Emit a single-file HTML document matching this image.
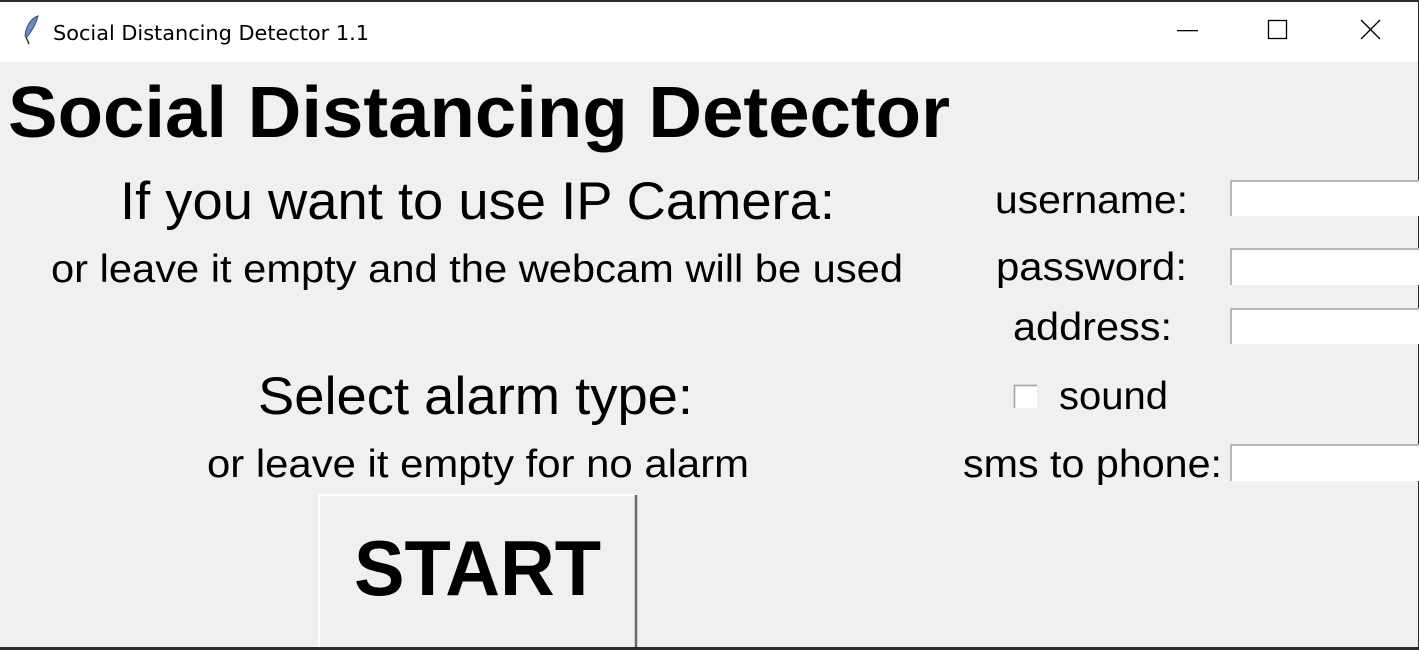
<!DOCTYPE html>
<html><head><meta charset="utf-8"><style>
html,body{margin:0;padding:0;width:1419px;height:650px;overflow:hidden;background:#f0f0f0}
svg{display:block}
text{font-family:"Liberation Sans",Arial,sans-serif;fill:#000}
</style></head><body>
<svg width="1419" height="650" viewBox="0 0 1419 650" xmlns="http://www.w3.org/2000/svg">
<rect x="0" y="0" width="1419" height="650" fill="#f0f0f0"/>
<rect x="0" y="0" width="1419" height="62" fill="#fff"/>
<rect x="0" y="0" width="1419" height="2" fill="#2b2b2b"/>
<rect x="1418" y="0" width="1" height="650" fill="#2b2b2b"/>
<rect x="0" y="647" width="1419" height="3" fill="#2b2b2b"/>
<!-- feather icon -->
<path d="M38 16 C31 18 26 26 25 36 L27 37 C31 32 36 24 38 16 Z" fill="#6b8cc4" stroke="#2d4a7a" stroke-width="1"/>
<path d="M26 37 L29 44" stroke="#333" stroke-width="1.5"/>
<text x="53" y="40" font-size="20" textLength="316" lengthAdjust="spacingAndGlyphs" style="font-family:'DejaVu Sans','Liberation Sans',sans-serif" fill="#000">Social Distancing Detector 1.1</text>
<!-- window controls -->
<rect x="1177" y="30" width="21" height="1.3" fill="#000"/>
<rect x="1268.5" y="20.5" width="18" height="18" fill="none" stroke="#000" stroke-width="1.3"/>
<path d="M1361 20 L1380 39 M1380 20 L1361 39" stroke="#000" stroke-width="1.3"/>
<!-- content -->
<text x="8" y="137" font-size="72" font-weight="bold" textLength="942" lengthAdjust="spacingAndGlyphs">Social Distancing Detector</text>
<text x="120" y="219" font-size="53" textLength="715" lengthAdjust="spacingAndGlyphs">If you want to use IP Camera:</text>
<text x="51" y="282" font-size="39" textLength="852" lengthAdjust="spacingAndGlyphs">or leave it empty and the webcam will be used</text>
<text x="258" y="414" font-size="53" textLength="435" lengthAdjust="spacingAndGlyphs">Select alarm type:</text>
<text x="207" y="477" font-size="39" textLength="542" lengthAdjust="spacingAndGlyphs">or leave it empty for no alarm</text>
<text x="995" y="213" font-size="39" textLength="193" lengthAdjust="spacingAndGlyphs">username:</text>
<text x="996" y="280" font-size="39" textLength="191" lengthAdjust="spacingAndGlyphs">password:</text>
<text x="1013" y="340" font-size="39" textLength="159" lengthAdjust="spacingAndGlyphs">address:</text>
<text x="1059" y="409" font-size="39" textLength="109" lengthAdjust="spacingAndGlyphs">sound</text>
<text x="963" y="477" font-size="39" textLength="259" lengthAdjust="spacingAndGlyphs">sms to phone:</text>
<!-- checkbox -->
<rect x="1014" y="385" width="23" height="23" fill="#fff"/>
<path d="M1014.5 408 V385.5 H1037" stroke="#a0a0a0" stroke-width="1.5" fill="none"/>
<!-- entries -->
<g fill="#fff">
<rect x="1230" y="180" width="189" height="36"/>
<rect x="1230" y="248" width="189" height="37"/>
<rect x="1230" y="308" width="189" height="36"/>
<rect x="1230" y="444" width="189" height="37"/>
</g>
<g stroke="#a0a0a0" stroke-width="1.5" fill="none">
<path d="M1231 216 V181 H1419"/>
<path d="M1231 285 V249 H1419"/>
<path d="M1231 344 V309 H1419"/>
<path d="M1231 481 V445 H1419"/>
</g>
<!-- button -->
<rect x="318" y="494" width="319" height="153" fill="#f0f0f0"/>
<path d="M319 647 V495 H636" stroke="#fff" stroke-width="2" fill="none"/>
<path d="M636 495 V647" stroke="#6a6a6a" stroke-width="2.5"/>
<text x="354" y="595" font-size="78" font-weight="bold" textLength="247" lengthAdjust="spacingAndGlyphs">START</text>
</svg>
</body></html>
